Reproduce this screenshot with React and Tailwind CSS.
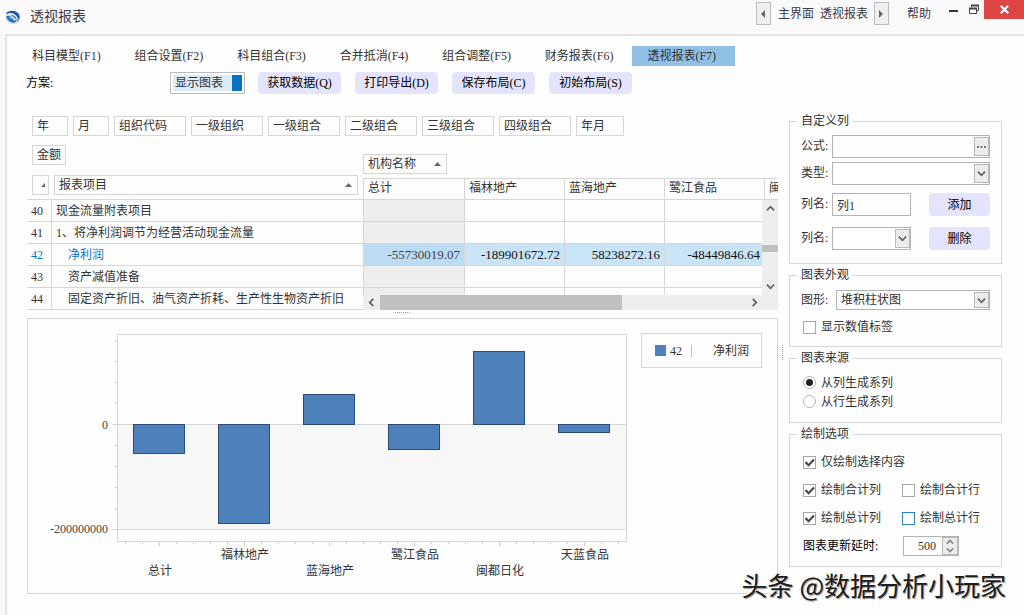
import React from "react";

const tabs = [
  "科目模型(F1)",
  "组合设置(F2)",
  "科目组合(F3)",
  "合并抵消(F4)",
  "组合调整(F5)",
  "财务报表(F6)",
  "透视报表(F7)",
];

const actions = ["获取数据(Q)", "打印导出(D)", "保存布局(C)", "初始布局(S)"];

const fields = [
  ["年", "w-9"],
  ["月", "w-9"],
  ["组织代码", "w-18"],
  ["一级组织", "w-18"],
  ["一级组合", "w-18"],
  ["二级组合", "w-18"],
  ["三级组合", "w-18"],
  ["四级组合", "w-18"],
  ["年月", "w-12"],
];

const columns = ["总计", "福林地产", "蓝海地产", "鹭江食品", "闽都日化"];

const rows = [
  { no: 40, name: "现金流量附表项目" },
  { no: 41, name: "1、将净利润调节为经营活动现金流量" },
  {
    no: 42,
    name: "净利润",
    indent: true,
    values: ["-55730019.07", "-189901672.72", "58238272.16", "-48449846.64"],
  },
  { no: 43, name: "资产减值准备", indent: true },
  { no: 44, name: "固定资产折旧、油气资产折耗、生产性生物资产折旧", indent: true },
];

const bars = [
  { label: "总计", x: 133, top: 424, bottom: 453, low: true },
  { label: "福林地产", x: 218, top: 424, bottom: 523 },
  { label: "蓝海地产", x: 303, top: 394, bottom: 424, low: true },
  { label: "鹭江食品", x: 388, top: 424, bottom: 449 },
  { label: "闽都日化", x: 473, top: 351, bottom: 424, low: true },
  { label: "天蓝食品", x: 558, top: 424, bottom: 432 },
];

function Logo() {
  return (
    <svg width="16" height="16" viewBox="0 0 16 16" aria-hidden="true">
      <ellipse cx="8" cy="8.300" rx="7.300" ry="6.600" fill="#cfd5de" />
      <path d="M.8 4.200C3.500 1 9.800.8 13 4.200c2.400 2.700 2 6-.2 8C11 9 6 5 .8 4.200z" fill="#1d5aa6" />
      <path d="M1.200 7.200C4.500 6.300 9 8.200 11.500 12.800 8 14.500 2.400 12.800 1.200 7.200z" fill="#2472c0" />
      <path d="M3.200 5.200c4-1.200 8.300 1.200 9.800 5.600" fill="none" stroke="#eef4fb" strokeWidth="1.500" />
      <path d="M4.500 8.300c2.400.2 4.300 1.400 5.500 3.200" fill="none" stroke="#cfe2f4" strokeWidth="1.100" />
    </svg>
  );
}

function Chevron({ dir = "down", size = 10, stroke = 2, className = "stroke-[#666666]" }) {
  const d = {
    down: "M1 3l4 4 4-4",
    up: "M1 7l4-4 4 4",
    left: "M7 1L3 5l4 4",
    right: "M3 1l4 4-4 4",
  }[dir];
  return (
    <svg width={size} height={size} viewBox="0 0 10 10" className={className} fill="none" strokeWidth={stroke} aria-hidden="true">
      <path d={d} />
    </svg>
  );
}

function SortUp() {
  return (
    <svg width="7" height="4" viewBox="0 0 7 4" aria-hidden="true">
      <path d="M0 4L3.500 0 7 4z" fill="#666" />
    </svg>
  );
}

function PageButton({ dir, label }) {
  return (
    <button aria-label={label} className="flex h-[23px] w-[15px] items-center justify-center border border-[#bdbdbd] bg-[#efefef]">
      <svg width="4" height="8" viewBox="0 0 4 8" aria-hidden="true">
        <path d={dir === "left" ? "M4 0v8L0 4z" : "M0 0v8l4-4z"} fill="#666" />
      </svg>
    </button>
  );
}

function Header() {
  return (
    <header className="flex h-[34px] items-start text-[#3c3a4c]">
      <div className="flex flex-1 items-center gap-[9px] pt-[7px] pl-[5px]">
        <Logo />
        <h1 className="text-[14px] leading-5">透视报表</h1>
      </div>
      <nav className="flex items-center pt-[2px] leading-5">
        <PageButton dir="left" label="上一页" />
        <a href="#home" className="ml-[7px] pt-[1px]">主界面</a>
        <a href="#pivot" className="mr-[6px] ml-[6px] pt-[1px]">透视报表</a>
        <PageButton dir="right" label="下一页" />
        <a href="#help" className="ml-[18px] pt-[1px]">帮助</a>
      </nav>
      <div className="flex items-start pl-[16px]">
        <button aria-label="最小化" className="flex h-[19px] w-[14px] items-center">
          <svg width="14" height="19" viewBox="0 0 14 19" aria-hidden="true">
            <path d="M2 11h9" stroke="#333" strokeWidth="2" />
          </svg>
        </button>
        <button aria-label="还原" className="h-[19px] w-[23px]">
          <svg width="23" height="19" viewBox="0 0 23 19" fill="none" stroke="#444" aria-hidden="true">
            <path d="M10.500 7V5.500h7v5H16" />
            <path d="M10 5.500h8" strokeWidth="2" />
            <path d="M8.500 8.500h7v5h-7z" />
            <path d="M8 8.500h8" strokeWidth="2" />
          </svg>
        </button>
        <button aria-label="关闭" className="flex h-[19px] w-10 items-center justify-center bg-[#df4444]">
          <svg width="9" height="9" viewBox="0 0 9 9" stroke="#fff" strokeWidth="2.200" aria-hidden="true">
            <path d="M.8.800l7.400 7.400M8.200.800L.800 8.200" />
          </svg>
        </button>
      </div>
    </header>
  );
}

function Toolbar() {
  return (
    <>
      <nav className="grid max-w-[718px] grid-cols-7 pt-[10px]">
        {tabs.map((t, i) => (
          <a
            key={t}
            href={"#tab" + (i + 1)}
            className={
              i === 6
                ? "h-5 bg-[#90c0e3] pl-[15px] leading-5 whitespace-nowrap"
                : "h-5 pl-[15px] leading-5 whitespace-nowrap"
            }
          >
            {t}
          </a>
        ))}
      </nav>
      <div className="flex items-center gap-[13px] pt-[6px] pl-[9px] text-black">
        <span className="w-[131px]">方案:</span>
        <button aria-pressed="true" className="flex h-[22px] w-[75px] items-stretch border border-[#b9bdc0] bg-white p-[2px] text-[#333]">
          <span className="flex-1 bg-[#dcebf6] pl-[2px] text-left leading-4">显示图表</span>
          <span className="w-[10px] bg-[#0872c5]" />
        </button>
        <div className="flex gap-[14px]">
          {actions.map((a) => (
            <button key={a} className="h-[22px] w-[83px] rounded bg-[#e5e4fd] whitespace-nowrap">
              {a}
            </button>
          ))}
        </div>
      </div>
    </>
  );
}

function PivotFields() {
  return (
    <>
      <div className="flex gap-[5px] pl-[5px]">
        {fields.map(([name, w]) => (
          <button key={name} className={w + " h-5 border border-[#d6d6d6] pl-1 text-left leading-[18px] whitespace-nowrap"}>
            {name}
          </button>
        ))}
      </div>
      <div className="mt-[9px] flex h-[29px] pl-[5px]">
        <div className="w-[331px]">
          <button className="h-5 border border-[#d6d6d6] px-1 leading-[18px]">金额</button>
        </div>
        <button className="flex h-5 w-[84px] items-center justify-between self-end border border-[#d6d6d6] pr-[5px] pl-1">
          机构名称
          <SortUp />
        </button>
      </div>
    </>
  );
}

function PivotTable() {
  return (
    <div className="relative mt-[1px] h-[135px] overflow-hidden">
      <table className="w-full table-fixed border-separate border-spacing-0">
        <colgroup>
          <col className="w-[25px]" />
          <col className="w-[311px]" />
          <col className="w-[102px]" />
          <col className="w-[100px]" />
          <col className="w-[100px]" />
          <col className="w-[100px]" />
          <col />
        </colgroup>
        <thead>
          <tr className="h-[25px] text-left align-top">
            <th className="border-b border-[#d6d6d6] p-0 pl-[5px] font-normal">
              <div className="flex h-5 w-[17px] items-center justify-end border border-[#d6d6d6] pr-[3px]">
                <svg width="4" height="4" viewBox="0 0 4 4" aria-hidden="true">
                  <path d="M0 4L4 0v4z" fill="#666" />
                </svg>
              </div>
            </th>
            <th className="border-b border-[#d6d6d6] p-0 pr-[5px] pl-[2px] font-normal">
              <div className="flex h-5 items-center justify-between border border-[#d6d6d6] pr-[5px] pl-1">
                报表项目
                <SortUp />
              </div>
            </th>
            {columns.map((c, i) => (
              <th key={c} className="border-b border-[#d6d6d6] p-0 pt-[3px] font-normal">
                <div
                  className={
                    (i === 0 ? "border-l " : "") +
                    (i < 4 ? "border-r " : "") +
                    "h-[21px] overflow-hidden border-t border-[#d6d6d6] pl-1 leading-[18px] whitespace-nowrap"
                  }
                >
                  {c}
                </div>
              </th>
            ))}
          </tr>
        </thead>
        <tbody>
          {rows.map((r) => (
            <tr key={r.no} className={r.values ? "h-[22px] text-[#0a74c8]" : "h-[22px]"}>
              <td className="border-r border-b border-[#d6d6d6] p-0 pl-1 leading-5">{r.no}</td>
              <td className={(r.indent ? "pl-4 " : "pl-1 ") + "border-b border-[#d6d6d6] py-0 pr-0 leading-5 whitespace-nowrap"}>{r.name}</td>
              {columns.map((c, i) => (
                <td
                  key={c}
                  className={
                    (i === 0 ? "border-l " : "") +
                    (r.values
                      ? i === 0
                        ? "bg-[#bcdcf4] text-[#444] "
                        : "bg-[#cae4f7] text-[#111] "
                      : i === 0
                        ? "bg-[#eeeeee] "
                        : "") +
                    "border-r border-b border-[#d6d6d6] py-0 pr-1 pl-0 text-right text-[13px] leading-5"
                  }
                >
                  {r.values ? r.values[i] : null}
                </td>
              ))}
            </tr>
          ))}
        </tbody>
      </table>
      <div className="absolute top-[25px] right-0 bottom-[15px] flex w-4 flex-col items-center bg-[#eeeeee] py-1">
        <Chevron dir="up" size={9} />
        <div className="mt-[32px] mb-auto h-[7px] w-4 bg-[#bfbfbf]" />
        <Chevron dir="down" size={9} />
      </div>
      <div className="absolute right-0 bottom-0 left-[336px] flex h-[15px] items-center bg-[#eeeeee] pr-[19px] pl-[4px]">
        <Chevron dir="left" size={9} />
        <div className="mr-auto ml-1 h-[15px] w-[242px] bg-[#bfbfbf]" />
        <Chevron dir="right" size={9} />
      </div>
    </div>
  );
}

function Chart() {
  const minorY = [340, 361, 382, 403, 445, 466, 487, 508];
  const minorX = Array.from({ length: 30 }, (_, i) => i).filter((i) => i % 5 !== 2);
  return (
    <section className="flex items-start border border-[#d6d6d6]">
      <svg width="600" height="274" viewBox="28 319 600 274" className="flex-none" shapeRendering="crispEdges" role="img" aria-label="净利润堆积柱状图">
        <rect x="117.500" y="334.500" width="509" height="207" fill="#fefefe" stroke="#d6d6d6" />
        <rect x="118" y="425" width="508" height="104" fill="#f7f7f7" />
        <path d="M112 424.500h514M112 529.500h514" stroke="#d6d6d6" />
        {minorY.map((y) => (
          <path key={y} d={`M115 ${y + 0.5}h2`} stroke="#cfcfcf" />
        ))}
        {minorX.map((i) => (
          <path key={i} d={`M${Math.round(125 + i * 17) + 0.5} 542v2`} stroke="#cfcfcf" />
        ))}
        {bars.map((b) => (
          <g key={b.label}>
            <path d={`M${b.x + 26.5} 542v4`} stroke="#cfcfcf" />
            <rect x={b.x + 0.5} y={b.top + 0.5} width="51" height={b.bottom - b.top} fill="#4e81bc" stroke="#2b4c77" />
            <text x={b.x + 27} y={b.low ? 575 : 559} textAnchor="middle" fill="#333">
              {b.label}
            </text>
          </g>
        ))}
        <text x="108" y="429" textAnchor="end" fill="#444">0</text>
        <text x="108" y="533" textAnchor="end" fill="#444">-200000000</text>
      </svg>
      <div className="mt-[14px] ml-[13px] flex h-[35px] w-[121px] items-center border border-[#d6d6d6] pl-[13px]">
        <span className="h-[11px] w-[11px] bg-[#4e81bc]" />
        <span className="ml-1">42</span>
        <span className="ml-[9px] h-3 w-px bg-[#c9b9b4]" />
        <span className="ml-[21px]">净利润</span>
      </div>
    </section>
  );
}

function Group({ title, className, children }) {
  return (
    <fieldset className={className + " border border-[#d6d6d6] px-[11px]"}>
      <legend className="-ml-1 h-[18px] px-1 leading-[18px]">{title}</legend>
      {children}
    </fieldset>
  );
}

function Select({ id, className, children }) {
  return (
    <div className={className + " relative"}>
      <select id={id} className="block h-full w-full appearance-none rounded-none border border-[#b3b3b3] bg-white pl-1">
        {children}
      </select>
      <span className="pointer-events-none absolute top-[2px] right-[1px] bottom-[2px] flex w-[15px] items-center justify-center border border-[#b9b9b9] bg-[#ececec]">
        <Chevron size={9} stroke={2} />
      </span>
    </div>
  );
}

function Check({ label, checked, focused }) {
  return (
    <label className="flex h-[18px] items-center gap-[5px] whitespace-nowrap">
      <span className="relative h-[13px] w-[13px]">
        <input
          type="checkbox"
          defaultChecked={checked}
          className={
            (focused ? "border-[#2d83cb] " : "border-[#a8a8a8] ") +
            "peer block h-[13px] w-[13px] appearance-none border bg-white"
          }
        />
        <svg width="13" height="13" viewBox="0 0 13 13" className="pointer-events-none absolute inset-0 hidden peer-checked:block" aria-hidden="true">
          <path d="M2.500 6l3 3.200L11 3.500" fill="none" stroke="#444" strokeWidth="2" />
        </svg>
      </span>
      {label}
    </label>
  );
}

function Radio({ label, checked }) {
  return (
    <label className="flex h-[19px] items-center gap-[5px]">
      <span className="relative h-[13px] w-[13px]">
        <input
          type="radio"
          name="source"
          defaultChecked={checked}
          className="peer block h-[13px] w-[13px] appearance-none rounded-full border border-[#b3b3b3] bg-white"
        />
        <span className="pointer-events-none absolute inset-[3px] hidden rounded-full bg-[#222] peer-checked:block" />
      </span>
      {label}
    </label>
  );
}

function Settings() {
  return (
    <aside className="flex w-[213px] flex-none flex-col">
      <Group title="自定义列" className="pb-[13px]">
        <div className="flex h-[28px] items-end pt-[5px]">
          <label htmlFor="formula" className="w-[31px] leading-[23px]">公式:</label>
          <div className="relative h-[23px] flex-1">
            <input id="formula" className="block h-full w-full border border-[#b3b3b3] px-1" />
            <button aria-label="编辑公式" className="absolute top-[2px] right-[1px] bottom-[2px] flex w-[15px] items-center justify-center border border-[#b9b9b9] bg-[#ececec]">
              <svg width="9" height="2" viewBox="0 0 9 2" aria-hidden="true">
                <path d="M0 0h2v2H0zM3.500 0h2v2h-2zM7 0h2v2H7z" fill="#777" />
              </svg>
            </button>
          </div>
        </div>
        <div className="mt-1 flex">
          <label htmlFor="type" className="w-[31px] leading-[23px]">类型:</label>
          <Select id="type" className="h-[23px] flex-1" />
        </div>
        <div className="mt-2 flex">
          <label htmlFor="new-col" className="w-[31px] leading-[23px]">列名:</label>
          <input id="new-col" defaultValue="列1" className="h-[23px] w-[79px] border border-[#b3b3b3] px-1" />
          <button className="ml-auto h-[23px] w-[61px] rounded bg-[#e5e4fd] text-black">添加</button>
        </div>
        <div className="mt-[11px] flex">
          <label htmlFor="del-col" className="w-[31px] leading-[23px]">列名:</label>
          <Select id="del-col" className="h-[23px] w-[79px]" />
          <button className="ml-auto h-[23px] w-[61px] rounded bg-[#e5e4fd] text-black">删除</button>
        </div>
      </Group>

      <Group title="图表外观" className="mt-[2px] pb-[10px]">
        <div className="flex pt-[6px]">
          <label htmlFor="shape" className="w-[35px] leading-5">图形:</label>
          <Select id="shape" className="h-5 flex-1">
            <option>堆积柱状图</option>
          </Select>
        </div>
        <div className="mt-2 pl-[2px]">
          <Check label="显示数值标签" />
        </div>
      </Group>

      <Group title="图表来源" className="mt-[2px] pb-[11px]">
        <div className="pt-[6px] pl-[2px]">
          <Radio label="从列生成系列" checked />
          <Radio label="从行生成系列" />
        </div>
      </Group>

      <Group title="绘制选项" className="mt-[2px] pb-[10px]">
        <div className="grid grid-cols-[99px_1fr] gap-y-[10px] pt-[10px] pl-[2px]">
          <div className="col-span-2">
            <Check label="仅绘制选择内容" checked />
          </div>
          <Check label="绘制合计列" checked />
          <Check label="绘制合计行" />
          <Check label="绘制总计列" checked />
          <Check label="绘制总计行" focused />
        </div>
        <div className="mt-[9px] flex items-center pl-[2px]">
          <label htmlFor="delay" className="w-[100px] text-black">图表更新延时:</label>
          <div className="relative">
            <input id="delay" defaultValue="500" className="block h-5 w-[56px] border border-[#b3b3b3] pr-[22px] text-right" />
            <div className="absolute top-[1px] right-[1px] bottom-[1px] flex w-[16px] flex-col border border-[#b9b9b9] bg-[#ececec]">
              <button aria-label="增加" className="flex flex-1 items-center justify-center">
                <Chevron dir="up" size={8} stroke={2} className="stroke-[#888888]" />
              </button>
              <button aria-label="减少" className="flex flex-1 items-center justify-center">
                <Chevron dir="down" size={8} stroke={2} className="stroke-[#888888]" />
              </button>
            </div>
          </div>
        </div>
      </Group>
    </aside>
  );
}

export default function App() {
  return (
    <div className="relative flex min-h-screen flex-col bg-[#fafafa] font-['Liberation_Serif','Noto_Sans_CJK_SC',sans-serif] text-[12px] leading-[18px] text-[#333]">
      <Header />
      <main className="ml-[5px] flex-1 border-t-2 border-l-2 border-[#e4e4e4] bg-[#fefefe]">
        <div className="pl-[10px]">
          <Toolbar />
        </div>
        <div className="flex items-start pt-[18px] pr-[22px] pl-5">
          <div className="min-w-0 flex-1 pt-[4px]">
            <PivotFields />
            <PivotTable />
            <div className="flex h-[8px] justify-center pt-[2px]">
              <div className="h-px w-[15px] border-t border-dotted border-[#999999]" />
            </div>
            <Chart />
          </div>
          <div className="mt-[233px] mr-[5px] ml-[4px] h-[15px] w-[2px] border-l border-dotted border-[#999999]" />
          <Settings />
        </div>
      </main>
      <div className="pointer-events-none absolute right-[18px] bottom-3 font-['Noto_Sans_CJK_SC',sans-serif] text-[26px] leading-9 text-[#1c1c1c] [text-shadow:-1px_-1px_0_#fff,1px_1px_1px_#888]">
        头条 @数据分析小玩家
      </div>
    </div>
  );
}
